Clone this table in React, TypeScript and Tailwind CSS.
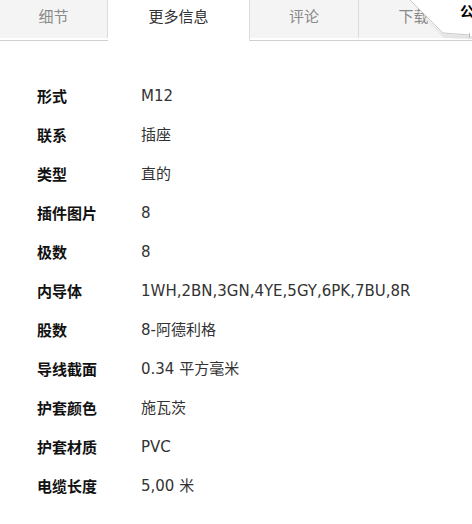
import React from "react";

const rows: [string, string][] = [
  ["形式", "M12"],
  ["联系", "插座"],
  ["类型", "直的"],
  ["插件图片", "8"],
  ["极数", "8"],
  ["内导体", "1WH,2BN,3GN,4YE,5GY,6PK,7BU,8R"],
  ["股数", "8-阿德利格"],
  ["导线截面", "0.34 平方毫米"],
  ["护套颜色", "施瓦茨"],
  ["护套材质", "PVC"],
  ["电缆长度", "5,00 米"],
];

export default function App() {
  return (
    <div className="relative w-[472px] h-[524px] bg-white overflow-hidden font-['Noto_Sans_CJK_SC','DejaVu_Sans',sans-serif]">
      {/* tabs */}
      <div className="h-[41px] border-b border-[#cfcfcf] flex items-start bg-white">
        <div className="flex h-[38px] w-full">
          <div className="w-[108px] h-full bg-[#f4f4f4] flex items-center justify-center text-[15px] text-[#8a8a8a] pb-[6px] border-r border-[#dcdcdc]">
            细节
          </div>
          <div className="w-[142px] h-[41px] bg-white flex items-center justify-center text-[15px] text-[#333] pb-[9px] border-r border-[#dcdcdc]">
            更多信息
          </div>
          <div className="w-[109px] h-full bg-[#f4f4f4] flex items-center justify-center text-[15px] text-[#8a8a8a] pb-[6px] border-r border-[#dcdcdc]">
            评论
          </div>
          <div className="w-[109px] h-full bg-[#f4f4f4] flex items-center justify-center text-[15px] text-[#8a8a8a] pb-[6px]">
            下载
          </div>
        </div>
      </div>

      {/* page curl */}
      <svg className="absolute top-0 right-0" width="72" height="40" viewBox="0 0 72 40">
        <defs>
          <linearGradient id="sh" x1="0" y1="0" x2="1" y2="1">
            <stop offset="0" stopColor="#f4f4f4" />
            <stop offset="1" stopColor="#d8d8d8" />
          </linearGradient>
        </defs>
        <polygon points="6,0 43,34 70,36 72,36 72,39 44,38" fill="url(#sh)" opacity="0.7" />
        <polygon points="10,0 43,33 72,35 72,0" fill="#ffffff" />
        <polyline points="10,0 43,33 70,35" fill="none" stroke="#c8c8c8" strokeWidth="1" />
        <line x1="69.5" y1="33" x2="69.5" y2="38" stroke="#bbbbbb" strokeWidth="1" />
      </svg>
      <div className="absolute top-[1px] left-[460px] text-[14px] font-bold text-black leading-[18px]">
        公
      </div>

      {/* table */}
      <div className="flex flex-col pt-[36px]">
        {rows.map(([k, v]) => (
          <div key={k} className="flex items-center h-[39px]">
            <div className="w-[141px] shrink-0 pl-[37px] text-[15px] font-bold text-[#111] whitespace-nowrap">
              {k}
            </div>
            <div className="text-[15px] text-[#333] whitespace-nowrap font-['DejaVu_Sans','Noto_Sans_CJK_SC',sans-serif]">
              {v}
            </div>
          </div>
        ))}
      </div>
    </div>
  );
}
